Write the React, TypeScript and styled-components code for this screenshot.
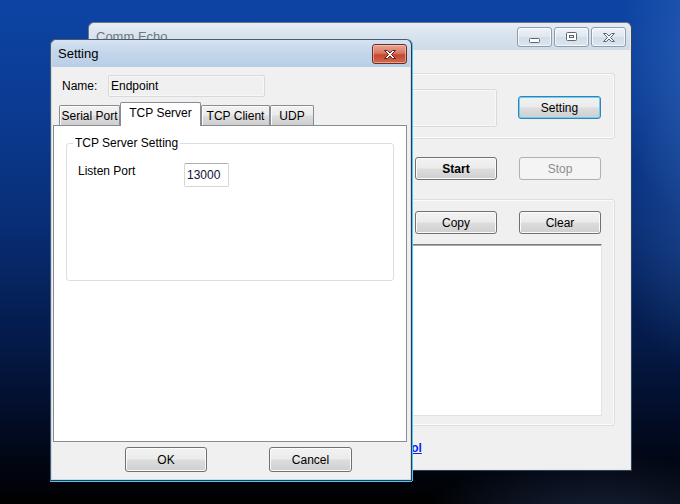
import React from 'react';
import styled, { createGlobalStyle, css } from 'styled-components';

const FONT = `"Liberation Sans", Arial, sans-serif`;

const Global = createGlobalStyle`
  html, body { margin: 0; padding: 0; width: 680px; height: 504px; overflow: hidden; }
  body { font-family: ${FONT}; font-size: 12px; color: #000; }
  * { box-sizing: border-box; }
`;

const Desktop = styled.div`
  position: relative;
  width: 680px;
  height: 504px;
  overflow: hidden;
  background:
    radial-gradient(ellipse 150px 230px at 720px 70px, rgba(70, 125, 205, 0.55), transparent 70%),
    radial-gradient(ellipse 120px 200px at 700px 230px, rgba(60, 110, 190, 0.35), transparent 70%),
    radial-gradient(ellipse 270px 110px at 600px 530px, rgba(28, 42, 72, 0.95), transparent 70%),
    linear-gradient(180deg, #0d44a4 0%, #0b3b92 22%, #082d74 45%, #041a48 68%, #020b22 85%, #000 100%);
`;

/* ---------- window chrome ---------- */

const Window = styled.div<{ $x: number; $y: number; $w: number; $h: number; $active?: boolean }>`
  position: absolute;
  left: ${p => p.$x}px;
  top: ${p => p.$y}px;
  width: ${p => p.$w}px;
  height: ${p => p.$h}px;
  display: flex;
  flex-direction: column;
  padding: 0 1px 1px 1px;
  border: 1px solid #6b7585;
  border-bottom-color: #3a4250;
  border-right-color: #3a4250;
  border-radius: 6px 6px 0 0;
  background: ${p => (p.$active ? '#c9d9ec' : '#dfe7f0')};
  ${p =>
    p.$active &&
    css`
      border-color: #4a5a70;
      border-right-color: #2a3a4c;
      border-bottom-color: #2a3a4c;
      box-shadow: 1px 0 0 #4cc6f2, 0 1px 0 #4cc6f2;
    `}
`;

const TitleBar = styled.div<{ $active?: boolean; $pr: number }>`
  height: 27px;
  flex: none;
  display: flex;
  align-items: flex-start;
  padding: 0 ${p => p.$pr}px 0 6px;
  border-radius: 5px 5px 0 0;
  background: ${p =>
    p.$active
      ? 'linear-gradient(180deg, #d6e3f2 0%, #c4d6eb 45%, #b9cee6 100%)'
      : 'linear-gradient(180deg, #e6edf5 0%, #d9e3ee 45%, #cfdbe8 100%)'};
`;

const TitleText = styled.div<{ $active?: boolean }>`
  flex: 1;
  align-self: center;
  font-family: ${FONT};
  font-size: 13px;
  color: ${p => (p.$active ? '#000' : '#6f7680')};
  white-space: nowrap;
`;

const CaptionGroup = styled.div`
  display: flex;
  gap: 2px;
  margin-top: 4px;
`;

const CaptionButton = styled.div<{ $danger?: boolean }>`
  width: 35px;
  height: 20px;
  display: flex;
  align-items: center;
  justify-content: center;
  border-radius: 3px;
  ${p =>
    p.$danger
      ? css`
          border: 1px solid #6e2b24;
          background: linear-gradient(180deg, #e8a593 0%, #d77862 45%, #c5472f 55%, #cf6a4e 100%);
          box-shadow: inset 0 0 0 1px rgba(255, 220, 210, 0.5);
        `
      : css`
          border: 1px solid #8e9cae;
          background: linear-gradient(180deg, #eef3f8 0%, #dfe7f0 48%, #d2dde9 52%, #dbe5ef 100%);
          box-shadow: inset 0 0 0 1px rgba(255, 255, 255, 0.7);
        `}
`;

const Client = styled.div`
  flex: 1;
  display: flex;
  flex-direction: column;
  background: #f0f0f0;
`;

/* ---------- controls ---------- */

const Button = styled.div<{ $w?: number; $h?: number; $bold?: boolean; $focus?: boolean; $disabled?: boolean }>`
  width: ${p => p.$w ?? 82}px;
  height: ${p => p.$h ?? 23}px;
  flex: none;
  display: flex;
  align-items: center;
  justify-content: center;
  font-family: ${FONT};
  font-size: 12px;
  font-weight: ${p => (p.$bold ? 700 : 400)};
  color: #000;
  border: 1px solid #707070;
  border-radius: 3px;
  background: linear-gradient(180deg, #f2f2f2 0%, #ebebeb 48%, #dddddd 52%, #cfcfcf 100%);
  box-shadow: inset 0 0 0 1px #fbfbfb;
  ${p =>
    p.$focus &&
    css`
      border-color: #3c7fb1;
      box-shadow: inset 0 0 0 1px #5fd3f8;
    `}
  ${p =>
    p.$disabled &&
    css`
      border-color: #adb2b5;
      background: #f4f4f4;
      box-shadow: none;
      color: #8d8d8d;
    `}
`;

const GroupBox = styled.div<{ $h: number }>`
  height: ${p => p.$h}px;
  flex: none;
  border: 1px solid #d5dfe5;
  border-radius: 3px;
  box-shadow: inset 0 0 0 1px #fbfbfb;
`;

/* ---------- main window ---------- */

const MainClient = styled(Client)`
  padding: 23px 15px 0 14px;
`;

const InfoGroup = styled(GroupBox)`
  display: flex;
  align-items: center;
  gap: 21px;
  padding: 3px 13px 0 13px;
`;

const InfoBox = styled.div`
  flex: 1;
  height: 38px;
  border: 1px solid #dadada;
  border-radius: 2px;
  background: #f0f0f0;
  box-shadow: inset 0 0 0 1px #f8f8f8;
`;

const ButtonRow = styled.div<{ $mt?: number; $pr?: number }>`
  display: flex;
  justify-content: flex-end;
  gap: 22px;
  margin-top: ${p => p.$mt ?? 0}px;
  padding-right: ${p => p.$pr ?? 0}px;
`;

const LogGroup = styled(GroupBox)`
  margin-top: 19px;
  display: flex;
  flex-direction: column;
  padding: 11px 12px 9px 13px;
`;

const LogArea = styled.div`
  flex: 1;
  margin-top: 10px;
  background: #fff;
  border: 1px solid;
  border-color: #7a7a7a #e2e2e2 #e2e2e2 #7a7a7a;
  box-shadow: inset 1px 1px 0 #a9a9a9;
`;

const LinkRow = styled.div`
  margin-top: 14px;
  padding-left: 230px;
  line-height: 16px;
`;

const Link = styled.span`
  font-weight: 700;
  color: #0b1df0;
  text-decoration: underline;
`;

/* ---------- dialog ---------- */

const DialogClient = styled(Client)`
  padding: 8px 0 0 0;
`;

const NameRow = styled.div`
  display: flex;
  align-items: center;
  padding-left: 10px;
  height: 22px;
`;

const NameLabel = styled.div`
  width: 46px;
`;

const NameBox = styled.div`
  width: 157px;
  height: 22px;
  display: flex;
  align-items: center;
  padding-left: 2px;
  border: 1px solid #d9d9d9;
  border-radius: 2px;
  background: #f0f0f0;
  box-shadow: inset 0 0 0 1px #f7f7f7;
`;

const TabControl = styled.div`
  margin: 5px 3px 0 1px;
  display: flex;
  flex-direction: column;
`;

const TabStrip = styled.div`
  height: 23px;
  display: flex;
  align-items: flex-end;
  padding-left: 6px;
`;

const Tab = styled.div<{ $w: number; $selected?: boolean }>`
  width: ${p => p.$w}px;
  height: ${p => (p.$selected ? 24 : 20)}px;
  margin-bottom: ${p => (p.$selected ? -1 : 0)}px;
  position: relative;
  z-index: ${p => (p.$selected ? 1 : 0)};
  display: flex;
  align-items: center;
  justify-content: center;
  padding-bottom: ${p => (p.$selected ? 3 : 0)}px;
  border: 1px solid #898c95;
  border-bottom: none;
  border-radius: 2px 2px 0 0;
  background: ${p =>
    p.$selected ? '#fff' : 'linear-gradient(180deg, #f2f2f2 0%, #ebebeb 48%, #dddddd 52%, #cfcfcf 100%)'};
  box-shadow: ${p => (p.$selected ? 'none' : 'inset 1px 1px 0 #fbfbfb')};
  white-space: nowrap;
`;

const TabPanel = styled.div`
  height: 317px;
  background: #fff;
  border: 1px solid #898c95;
  padding: 10px 0 0 12px;
`;

const Fieldset = styled.fieldset`
  margin: 0;
  width: 328px;
  height: 145px;
  padding: 13px 0 0 0;
  border: 1px solid #d5dfe5;
  border-radius: 3px;
`;

const Legend = styled.legend`
  margin-left: 6px;
  padding: 0 2px;
  line-height: 14px;
  font-size: 12px;
`;

const FieldRow = styled.div`
  display: flex;
  align-items: flex-start;
  padding-left: 11px;
`;

const FieldLabel = styled.div`
  width: 106px;
  padding-top: 1px;
`;

const PortInput = styled.div`
  width: 45px;
  height: 24px;
  display: flex;
  align-items: center;
  padding-left: 2px;
  border: 1px solid #d6d6d6;
  border-top-color: #abadb3;
  border-radius: 2px;
  color: #10103a;
  background: #fff;
`;

const DialogButtons = styled.div`
  display: flex;
  gap: 62px;
  margin-top: 5px;
  padding-left: 73px;
`;

/* ---------- glyphs ---------- */

const MinGlyph = () => (
  <svg width="13" height="18" viewBox="0 0 13 18">
    <rect x="1.5" y="10.5" width="10" height="4" rx="1" fill="#fff" stroke="#5d6673" />
  </svg>
);

const RestoreGlyph = () => (
  <svg width="13" height="12" viewBox="0 0 13 12">
    <rect x="1.5" y="1.5" width="10" height="8" rx="1" fill="#fff" stroke="#5d6673" />
    <rect x="4.5" y="4.5" width="4" height="2" fill="#e8edf3" stroke="#5d6673" />
  </svg>
);

const CloseGlyph = ({ light }: { light?: boolean }) => (
  <svg width="14" height="11" viewBox="0 0 14 11">
    <path
      d="M1.5 1.5 H4.5 L7 4 L9.5 1.5 H12.5 L8.5 5.5 L12.5 9.5 H9.5 L7 7 L4.5 9.5 H1.5 L5.5 5.5 Z"
      fill={light ? '#ffffff' : '#f4f6f9'}
      stroke={light ? '#5a2019' : '#5d6673'}
      strokeLinejoin="round"
    />
  </svg>
);

export default function App() {
  return (
    <>
      <Global />
      <Desktop>
        <Window $x={88} $y={22} $w={544} $h={449}>
          <TitleBar $pr={4}>
            <TitleText>Comm Echo</TitleText>
            <CaptionGroup>
              <CaptionButton><MinGlyph /></CaptionButton>
              <CaptionButton><RestoreGlyph /></CaptionButton>
              <CaptionButton><CloseGlyph /></CaptionButton>
            </CaptionGroup>
          </TitleBar>
          <MainClient>
            <InfoGroup $h={66}>
              <InfoBox />
              <Button $focus $w={83}>Setting</Button>
            </InfoGroup>
            <ButtonRow $mt={18} $pr={14}>
              <Button $bold>Start</Button>
              <Button $disabled>Stop</Button>
            </ButtonRow>
            <LogGroup $h={227}>
              <ButtonRow $pr={1}>
                <Button>Copy</Button>
                <Button>Clear</Button>
              </ButtonRow>
              <LogArea />
            </LogGroup>
            <LinkRow>
              <Link>Serial Port Tool</Link>
            </LinkRow>
          </MainClient>
        </Window>

        <Window $x={50} $y={39} $w={362} $h={442} $active>
          <TitleBar $active $pr={3}>
            <TitleText $active>Setting</TitleText>
            <CaptionGroup>
              <CaptionButton $danger><CloseGlyph light /></CaptionButton>
            </CaptionGroup>
          </TitleBar>
          <DialogClient>
            <NameRow>
              <NameLabel>Name:</NameLabel>
              <NameBox>Endpoint</NameBox>
            </NameRow>
            <TabControl>
              <TabStrip>
                <Tab $w={61}>Serial Port</Tab>
                <Tab $w={81} $selected>TCP Server</Tab>
                <Tab $w={69}>TCP Client</Tab>
                <Tab $w={44}>UDP</Tab>
              </TabStrip>
              <TabPanel>
                <Fieldset>
                  <Legend>TCP Server Setting</Legend>
                  <FieldRow>
                    <FieldLabel>Listen Port</FieldLabel>
                    <PortInput>13000</PortInput>
                  </FieldRow>
                </Fieldset>
              </TabPanel>
            </TabControl>
            <DialogButtons>
              <Button $h={25}>OK</Button>
              <Button $h={25} $w={83}>Cancel</Button>
            </DialogButtons>
          </DialogClient>
        </Window>
      </Desktop>
    </>
  );
}
